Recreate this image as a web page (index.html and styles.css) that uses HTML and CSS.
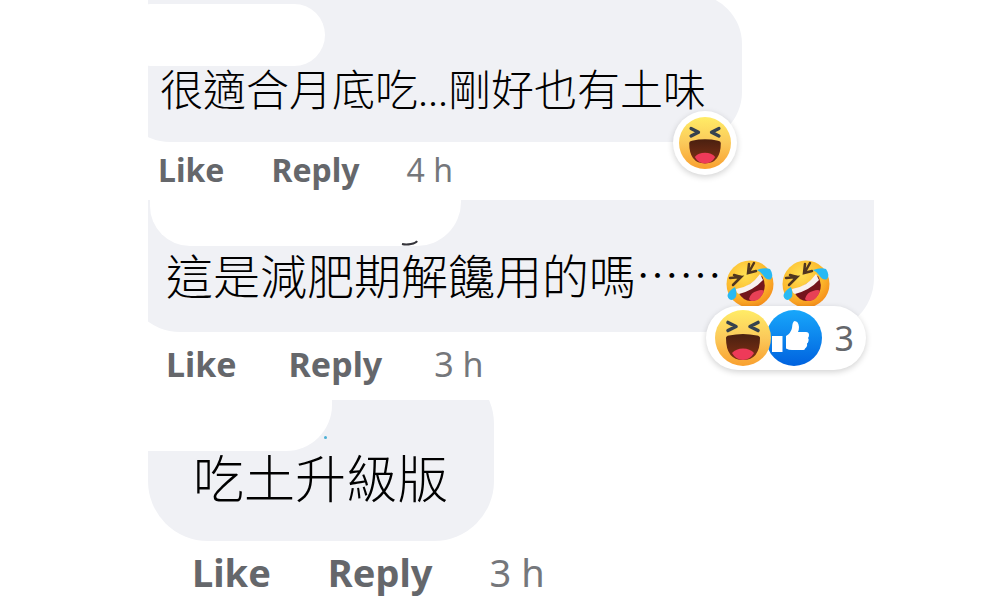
FILE: index.html
```html
<!DOCTYPE html>
<html lang="zh-Hant">
<head>
<meta charset="utf-8">
<title>Comments</title>
<link rel="stylesheet" href="styles.css">
</head>
<body>
<svg class="defs" width="0" height="0" aria-hidden="true">
  <defs>
    <linearGradient id="face" x1="0" y1="0" x2="0" y2="1"><stop offset="0" stop-color="#ffec66"/><stop offset=".5" stop-color="#fbc95a"/><stop offset="1" stop-color="#f9a02f"/></linearGradient>
    <linearGradient id="mouth" x1="0" y1="0" x2="0" y2="1"><stop offset="0" stop-color="#4a2010"/><stop offset="1" stop-color="#803015"/></linearGradient>
    <linearGradient id="blue" x1="0" y1="0" x2="0" y2="1"><stop offset="0" stop-color="#18a7fb"/><stop offset="1" stop-color="#0062df"/></linearGradient>
    <radialGradient id="rofl" cx=".4" cy=".3" r=".75"><stop offset="0" stop-color="#ffe052"/><stop offset=".6" stop-color="#fcb92c"/><stop offset="1" stop-color="#f58a1a"/></radialGradient>
    <symbol id="haha" viewBox="0 0 56 56">
      <circle cx="28" cy="28" r="28" fill="url(#face)"/>
      <path d="M13 12.500l8 4-8 4M43 12.500l-8 4 8 4" fill="none" stroke="#36424f" stroke-width="3.600" stroke-linecap="round" stroke-linejoin="round"/>
      <path d="M11 28q0-2 3-2.500Q28 22.500 42 25.500q3 .5 3 2.500 0 22-17 22T11 28z" fill="url(#mouth)"/>
      <path d="M17 43q4-4.500 11-4.500T39 43q-4 7-11 7t-11-7z" fill="#ee3a59"/>
    </symbol>
    <symbol id="like" viewBox="0 0 56 56">
      <circle cx="28" cy="28" r="28" fill="url(#blue)"/>
      <path d="M6 26h10.500v16H6z" fill="#fff"/>
      <path d="M20 26q5-3 6-8 .3-6 2.500-7 4 0 4.500 6 0 3-1 5h8q3 0 3 3 0 2-1 3 1 1 .5 3-.5 2-1.500 2.500.5 2-.5 3.500-1 1-1.500 1.500 0 1.500-3 1.500H26q-3 0-6-1.500z" fill="#fff"/>
    </symbol>
    <symbol id="rolling" viewBox="0 0 48 48">
      <circle cx="24" cy="24" r="23.500" fill="url(#rofl)"/>
      <path d="M12 32L36 16q5 9 1 17-4 8-12 8-8 0-13-9z" fill="#74151c"/>
      <path d="M23 39q2-7 8-8 5-2 7 0-3 10-12 10-2 0-3-2z" fill="#e74056"/>
      <path d="M10 29Q25 27 34 14l3 6Q28 30 13 34q-3-1-3-5z" fill="#f8f1f0"/>
      <path d="M4 18l11-1-8 8M8 15l7 2M23 4l-1 9 8-2M28 3l-5 9" fill="none" stroke="#503620" stroke-width="2.500" stroke-linecap="round"/>
      <path d="M9 27Q2 31 1.500 36q1 4 4.500 4 7-2 3-13zM31 10q8-3 13-1 4 6 1 10-4 2-8-4-2-3-6-5z" fill="#29b9f2"/>
    </symbol>
  </defs>
</svg>
<main class="thread">
  <article class="comment comment-a">
    <div class="bubble">
      <span class="redaction"></span>
      <p class="text">很適合月底吃...剛好也有土味</p>
      <div class="badge badge-single"><svg class="reaction" role="img" aria-label="Haha"><use href="#haha"/></svg></div>
    </div>
    <footer class="actions"><button type="button">Like</button><button type="button">Reply</button><time>4 h</time></footer>
  </article>
  <article class="comment comment-b">
    <div class="bubble">
      <span class="redaction"></span>
      <svg class="tail" viewBox="0 0 18 6" aria-hidden="true"><path d="M1 4q4 1 9 0t6-3" fill="none" stroke="#34343a" stroke-width="2"/></svg>
      <p class="text">這是減肥期解饞用的嗎<span class="dots">⋯⋯</span><svg class="emoji" role="img" aria-label="Rolling on the floor laughing"><use href="#rolling"/></svg><svg class="emoji" role="img" aria-label="Rolling on the floor laughing"><use href="#rolling"/></svg></p>
      <div class="badge badge-count">
        <svg class="reaction front" role="img" aria-label="Haha"><use href="#haha"/></svg>
        <svg class="reaction back" role="img" aria-label="Like"><use href="#like"/></svg>
        <span class="count">3</span>
      </div>
    </div>
    <footer class="actions"><button type="button">Like</button><button type="button">Reply</button><time>3 h</time></footer>
  </article>
  <article class="comment comment-c">
    <div class="bubble">
      <span class="redaction"></span>
      <span class="speck"></span>
      <p class="text">吃土升級版</p>
    </div>
    <footer class="actions"><button type="button">Like</button><button type="button">Reply</button><time>3 h</time></footer>
  </article>
</main>
</body>
</html>
```
FILE: styles.css
```css
* { box-sizing: border-box; }
body { margin: 0; background: #fff; color: #000; font-family: "Noto Sans", sans-serif; }
.defs { position: absolute; }
.thread { display: grid; grid-template-rows: repeat(3, 1fr); min-height: 100vh; margin-left: 148px; }
.comment { overflow: hidden; }
.bubble { position: relative; width: fit-content; background: #f0f1f5; }
.text { margin: 0; font-family: Lato, "Noto Sans CJK TC", sans-serif; font-weight: 300; white-space: nowrap; }
.redaction { position: absolute; background: #fff; }
.actions { display: flex; align-items: center; color: #65676b; }
.actions button { padding: 0; border: 0; background: none; color: inherit; font: inherit; font-weight: 700; cursor: pointer; }
.actions time { color: #75777b; }
.badge { position: absolute; display: flex; align-items: center; background: #fff; border-radius: 32px; box-shadow: 0 2px 6px rgba(0, 0, 0, .18); }
.reaction { display: block; flex: none; }

.comment-a .bubble { margin: -6px 0 0 -28px; padding: 70px 36px 26px 40px; border-radius: 50px; }
.comment-a .text { font-size: 43px; line-height: 52px; }
.comment-a .redaction { left: 0; top: 10px; width: 205px; height: 62px; border-radius: 31px; }
.comment-a .actions { gap: 47px; padding: 4px 10px; font-size: 32px; line-height: 48px; }
.badge-single { right: 5px; bottom: -33px; padding: 6px; }
.badge-single .reaction { width: 52px; height: 52px; }

.comment-b .bubble { margin-left: -22px; padding: 44px 40px 24px; border-radius: 0 0 54px 54px; }
.comment-b .text { display: flex; align-items: center; font-size: 47px; line-height: 56px; }
.comment-b .dots { font-size: 43px; }
.comment-b .redaction { left: 24px; top: 0; width: 311px; height: 46px; border-radius: 0 0 44px 40px; }
.comment-b .actions { gap: 52px; padding: 8px 18px; font-size: 34px; line-height: 48px; }
.emoji { width: 48px; height: 48px; margin: 16px 4px 0; }
.tail { position: absolute; left: 275px; top: 40px; width: 18px; height: 6px; }
.badge-count { right: 8px; bottom: -38px; padding: 4px 12px 4px 9px; }
.badge-count .reaction { width: 56px; height: 56px; }
.badge-count .front { position: relative; z-index: 1; }
.badge-count .back { margin-left: -5px; }
.count { margin-left: 13px; color: #65676b; font-size: 34px; line-height: 56px; }

.comment-c .bubble { margin-top: -36px; padding: 84px 46px 31px 45px; border-radius: 60px; }
.comment-c .text { font-size: 51px; line-height: 62px; }
.comment-c .redaction { left: 0; top: 0; width: 184px; height: 87px; border-radius: 0 0 46px 0; }
.comment-c .actions { gap: 57px; padding: 5px 44px 2px; font-size: 38px; line-height: 52px; }
.speck { position: absolute; left: 176px; top: 72px; width: 3px; height: 3px; border-radius: 50%; background: #4aafd5; }
```
